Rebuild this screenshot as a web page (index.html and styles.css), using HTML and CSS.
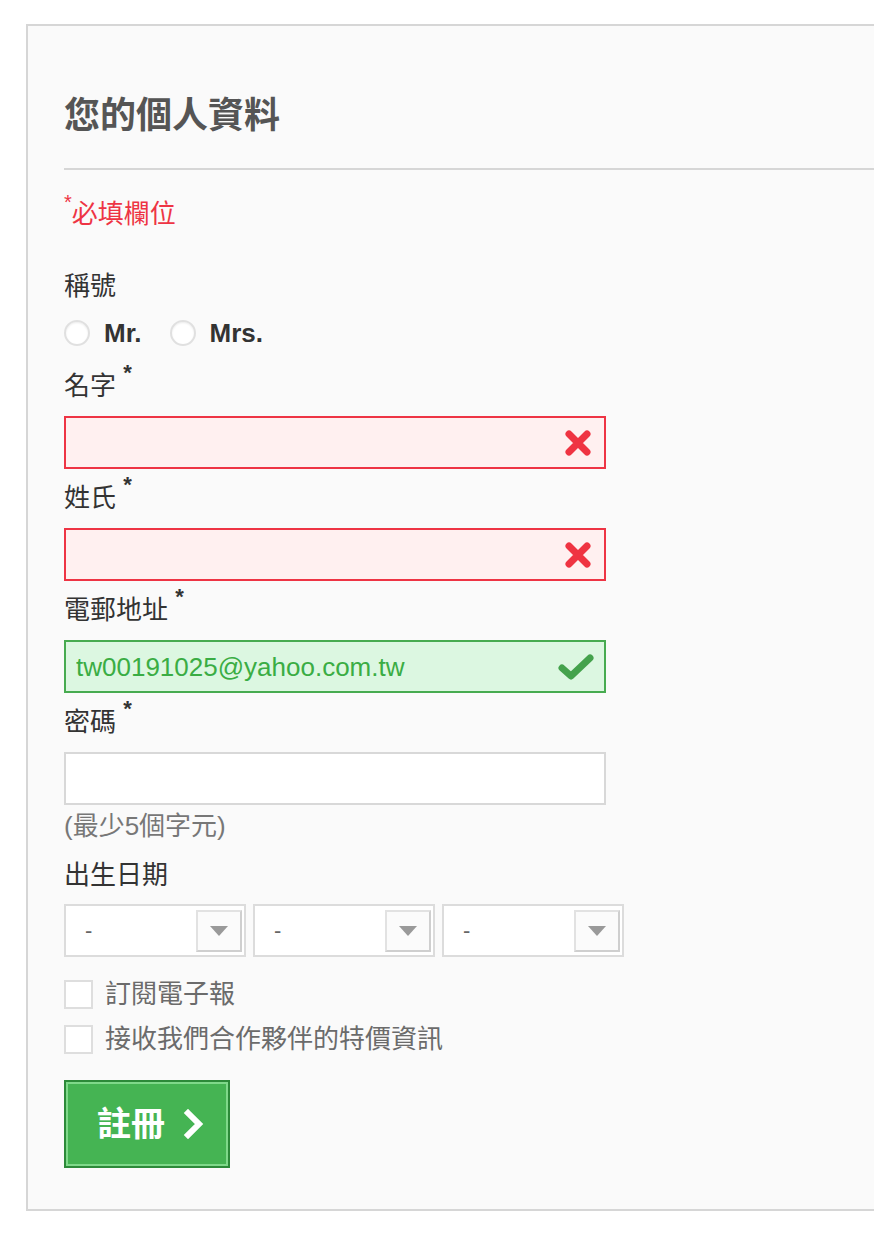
FILE: index.html
```html
<!DOCTYPE html>
<html lang="zh-Hant">
<head>
  <meta charset="UTF-8">
  <meta name="viewport" content="width=device-width, initial-scale=1.0">
  <title>您的個人資料</title>
  <link rel="stylesheet" href="styles.css">
</head>
<body>
  <div class="panel">
    <h1>您的個人資料</h1>
    <div class="required-note"><sup>*</sup>必填欄位</div>

    <div class="label">稱號</div>
    <div class="radios">
      <label class="radio"><input type="radio" name="title"> Mr.</label>
      <label class="radio"><input type="radio" name="title"> Mrs.</label>
    </div>

    <div class="label">名字 <sup>*</sup></div>
    <div class="field error">
      <input type="text">
      <svg class="icon" width="28" height="28" viewBox="0 0 28 28"><path d="M5 5 L23 23 M23 5 L5 23" stroke="#ef3442" stroke-width="7" stroke-linecap="round"/></svg>
    </div>

    <div class="label">姓氏 <sup>*</sup></div>
    <div class="field error">
      <input type="text">
      <svg class="icon" width="28" height="28" viewBox="0 0 28 28"><path d="M5 5 L23 23 M23 5 L5 23" stroke="#ef3442" stroke-width="7" stroke-linecap="round"/></svg>
    </div>

    <div class="label">電郵地址 <sup>*</sup></div>
    <div class="field valid">
      <input type="text" value="tw00191025@yahoo.com.tw">
      <svg class="icon check" width="36" height="28" viewBox="0 0 36 28"><path d="M4 15 L13 23 L32 5" fill="none" stroke="#44a24c" stroke-width="7" stroke-linecap="round" stroke-linejoin="round"/></svg>
    </div>

    <div class="label">密碼 <sup>*</sup></div>
    <div class="field">
      <input type="password">
    </div>
    <div class="hint">(最少5個字元)</div>

    <div class="label">出生日期</div>
    <div class="dates">
      <div class="select"><span class="value">-</span><span class="arrow"></span></div>
      <div class="select"><span class="value">-</span><span class="arrow"></span></div>
      <div class="select"><span class="value">-</span><span class="arrow"></span></div>
    </div>

    <label class="check-row"><input type="checkbox"> 訂閱電子報</label>
    <label class="check-row"><input type="checkbox"> 接收我們合作夥伴的特價資訊</label>

    <button class="submit">註冊
      <svg width="22" height="30" viewBox="0 0 22 30"><path d="M5 4 L16 15 L5 26" fill="none" stroke="#fff" stroke-width="6" stroke-linecap="square"/></svg>
    </button>
  </div>
</body>
</html>
```

FILE: styles.css
```css
body {
  margin: 0;
  padding: 24px 0 0 26px;
  font-family: "Liberation Sans", "Noto Sans CJK TC", sans-serif;
  font-size: 26px;
  line-height: 36px;
  color: #333;
  background: #fff;
  overflow-x: hidden;
}
.panel {
  background: #fafafa;
  border: 2px solid #d6d6d6;
  border-right: none;
  padding: 68px 0 41px 36px;
}
h1 {
  margin: 0;
  font-size: 36px;
  line-height: 44px;
  font-weight: bold;
  color: #555;
  padding-bottom: 30px;
  border-bottom: 2px solid #d6d6d6;
}
.required-note {
  color: #ee3444;
  margin-top: 26px;
}
.required-note sup {
  font-size: 20px;
  vertical-align: 14px;
  line-height: 0;
}
.label {
  margin-top: 11px;
}
.required-note + .label {
  margin-top: 36px;
}
.label sup {
  font-size: 22px;
  font-weight: bold;
  vertical-align: 15px;
  line-height: 0;
}
.radios {
  display: flex;
  gap: 28px;
  margin-top: 11px;
  margin-bottom: 17px;
}
.radio {
  display: flex;
  align-items: center;
  gap: 14px;
  font-weight: bold;
}
.radio input {
  appearance: none;
  margin: 0;
  width: 26px;
  height: 26px;
  border-radius: 50%;
  border: 2px solid #e0e0e0;
  background: #fff;
  box-shadow: inset 0 1px 2px rgba(0,0,0,0.08);
}
.field {
  display: flex;
  align-items: center;
  width: 538px;
  height: 49px;
  margin-top: 12px;
  border: 2px solid #d8d8d8;
  background: #fff;
}
.field input {
  flex: 1;
  min-width: 0;
  border: none;
  background: transparent;
  font: inherit;
  padding: 0 10px;
  outline: none;
}
.field .icon {
  margin-right: 12px;
}
.field .check {
  margin-right: 10px;
}
.field.error {
  border-color: #ee3444;
  background: #fff0f0;
}
.field.valid {
  border-color: #47ab50;
  background: #dcf7e1;
}
.field.valid input {
  color: #3aad44;
}
.hint {
  color: #777;
  margin-top: 3px;
}
.hint + .label {
  margin-top: 13px;
}
.dates {
  display: flex;
  gap: 7px;
  margin-top: 11px;
}
.select {
  display: flex;
  align-items: center;
  width: 178px;
  height: 49px;
  border: 2px solid #dcdcdc;
  background: #fff;
}
.select .value {
  flex: 1;
  padding-left: 19px;
  color: #666;
  font-size: 22px;
}
.select .arrow {
  width: 42px;
  height: 38px;
  margin-right: 2px;
  border: 2px solid #e2e2e2;
  border-right-color: #cfcfcf;
  border-bottom-color: #cfcfcf;
  background: #fbfbfb;
  display: flex;
  align-items: center;
  justify-content: center;
}
.select .arrow::after {
  content: "";
  border-left: 9px solid transparent;
  border-right: 9px solid transparent;
  border-top: 10px solid #9a9a9a;
}
.check-row {
  display: flex;
  align-items: center;
  gap: 12px;
  color: #6b6b6b;
  margin-top: 9px;
  height: 36px;
}
.dates + .check-row {
  margin-top: 19px;
}
.check-row input {
  appearance: none;
  margin: 0;
  width: 29px;
  height: 29px;
  border: 2px solid #dedede;
  background: #fff;
}
.submit {
  display: flex;
  align-items: center;
  gap: 18px;
  margin-top: 23px;
  width: 166px;
  height: 88px;
  padding: 0 0 0 31px;
  background: #45b453;
  color: #fff;
  font: inherit;
  font-size: 34px;
  font-weight: bold;
  border: 2px solid #2c8a39;
  box-shadow: inset 0 0 0 2px #7fd98a;
}
```
